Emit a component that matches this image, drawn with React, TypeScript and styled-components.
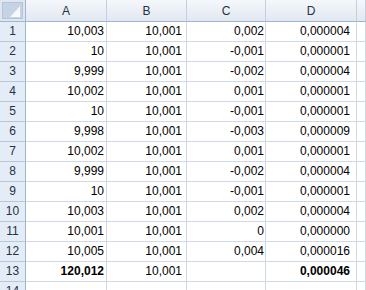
import React from 'react'
import styled, { createGlobalStyle } from 'styled-components'

const GlobalStyle = createGlobalStyle`
  html, body {
    margin: 0;
    padding: 0;
    background: #ffffff;
  }
  body {
    font-family: "Liberation Sans", Arial, sans-serif;
  }
`

const GRID = '#d0d7e5'
const HEAD_LINE = '#9eb6ce'

const Sheet = styled.div`
  display: grid;
  grid-template-columns: 26px 81px 80px 79px 91px 1fr;
  grid-template-rows: 22px;
  grid-auto-rows: 20px;
  width: 366px;
  height: 290px;
  overflow: hidden;
  font-size: 12px;
  color: #000;
`

const Corner = styled.div`
  box-sizing: border-box;
  background: #dfe6f0;
  border-right: 1px solid ${HEAD_LINE};
  border-bottom: 1px solid ${HEAD_LINE};
  padding: 2px;
  display: flex;
`

const CornerBox = styled.div`
  flex: 1;
  background: #c6d3e5;
  border: 1px solid #b5c4da;
  display: flex;
  align-items: flex-end;
  justify-content: flex-end;
  padding: 0 2px 1px 0;
`

const ColHeader = styled.div`
  box-sizing: border-box;
  background: linear-gradient(#f4f7fb, #e2e8f1);
  border-right: 1px solid #c4cedc;
  border-bottom: 1px solid ${HEAD_LINE};
  color: #27313f;
  display: flex;
  align-items: center;
  justify-content: center;
  line-height: 21px;
  padding-top: 1px;
`

const RowHeader = styled.div`
  box-sizing: border-box;
  background: #e4ecf7;
  border-right: 1px solid ${HEAD_LINE};
  border-bottom: 1px solid #b7c6d9;
  color: #27313f;
  display: flex;
  align-items: center;
  justify-content: center;
  line-height: 19px;
`

const Cell = styled.div<{ $pad: number; $bold?: boolean }>`
  box-sizing: border-box;
  border-right: 1px solid ${GRID};
  border-bottom: 1px solid ${GRID};
  text-align: right;
  padding-right: ${p => p.$pad}px;
  line-height: 19px;
  font-weight: ${p => (p.$bold ? 700 : 400)};
  white-space: nowrap;
`

const columns = ['A', 'B', 'C', 'D', '']
const pads = [2, 4, 1, 6, 0]

const rows: string[][] = [
  ['10,003', '10,001', '0,002', '0,000004'],
  ['10', '10,001', '-0,001', '0,000001'],
  ['9,999', '10,001', '-0,002', '0,000004'],
  ['10,002', '10,001', '0,001', '0,000001'],
  ['10', '10,001', '-0,001', '0,000001'],
  ['9,998', '10,001', '-0,003', '0,000009'],
  ['10,002', '10,001', '0,001', '0,000001'],
  ['9,999', '10,001', '-0,002', '0,000004'],
  ['10', '10,001', '-0,001', '0,000001'],
  ['10,003', '10,001', '0,002', '0,000004'],
  ['10,001', '10,001', '0', '0,000000'],
  ['10,005', '10,001', '0,004', '0,000016'],
  ['120,012', '10,001', '', '0,000046'],
  ['', '', '', ''],
]

// the totals row has A and D in bold
const isBold = (r: number, c: number) => r === 12 && (c === 0 || c === 3)

export default function App() {
  return (
    <>
      <GlobalStyle />
      <Sheet>
        <Corner>
          <CornerBox>
            <svg width="10" height="11" viewBox="0 0 10 11">
              <defs>
                <linearGradient id="tri" x1="0" y1="0" x2="1" y2="1">
                  <stop offset="0" stopColor="#e6edf6" />
                  <stop offset="1" stopColor="#ffffff" />
                </linearGradient>
              </defs>
              <polygon points="10,0 10,11 0,11" fill="url(#tri)" />
            </svg>
          </CornerBox>
        </Corner>
        {columns.map((name, i) => (
          <ColHeader key={i}>{name}</ColHeader>
        ))}
        {rows.map((row, r) => (
          <React.Fragment key={r}>
            <RowHeader>{r + 1}</RowHeader>
            {row.map((value, c) => (
              <Cell key={c} $pad={pads[c]} $bold={isBold(r, c)}>
                {value}
              </Cell>
            ))}
            <Cell $pad={0} />
          </React.Fragment>
        ))}
      </Sheet>
    </>
  )
}
